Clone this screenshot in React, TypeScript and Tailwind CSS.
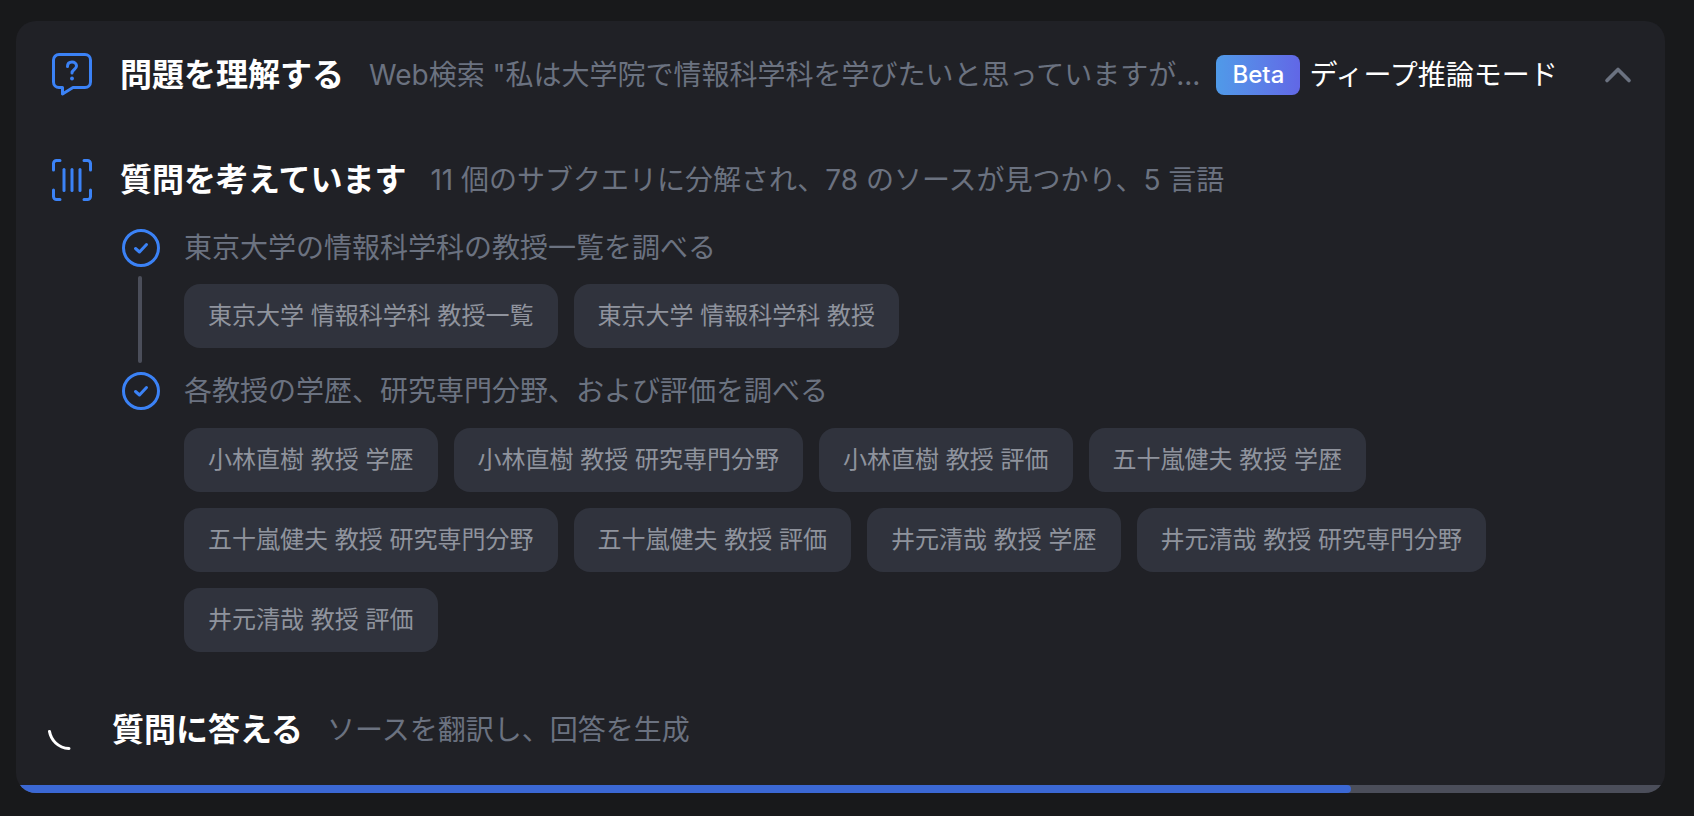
import { ChevronUp } from "lucide-react";

const font = { fontFamily: '"Inter", "Noto Sans CJK JP", sans-serif' };

function QuestionIcon() {
  return (
    <svg width="40" height="44" viewBox="0 0 40 44" fill="none" className="shrink-0">
      <path
        d="M7 1.500H33A5.500 5.500 0 0 1 38.500 7V29A5.500 5.500 0 0 1 33 34.500H21L10.500 41V34.500H7A5.500 5.500 0 0 1 1.500 29V7A5.500 5.500 0 0 1 7 1.500Z"
        stroke="#3b82f6"
        strokeWidth="3"
        strokeLinejoin="round"
      />
      <path
        d="M15.500 13.500C15.500 10.500 17.500 9 20 9C22.500 9 24.500 10.500 24.500 13C24.500 16.500 20 16.500 20 20"
        stroke="#3b82f6"
        strokeWidth="3"
        strokeLinecap="round"
      />
      <circle cx="20" cy="25.500" r="1.900" fill="#3b82f6" />
    </svg>
  );
}

function ScanIcon() {
  return (
    <svg width="40" height="42" viewBox="0 0 40 42" fill="none" className="shrink-0">
      <g stroke="#3b82f6" strokeWidth="3" strokeLinecap="round">
        <path d="M8 1.500H4.500A3 3 0 0 0 1.500 4.500V11" />
        <path d="M32 1.500H35.500A3 3 0 0 1 38.500 4.500V11" />
        <path d="M8 40.500H4.500A3 3 0 0 1 1.500 37.500V31" />
        <path d="M32 40.500H35.500A3 3 0 0 0 38.500 37.500V31" />
        <path d="M12 10.500V31.500" />
        <path d="M20 10.500V31.500" />
        <path d="M28 10.500V31.500" />
      </g>
    </svg>
  );
}

function CheckIcon() {
  return (
    <svg width="38" height="38" viewBox="0 0 38 38" fill="none" className="shrink-0">
      <circle cx="19" cy="19" r="17.500" stroke="#3b82f6" strokeWidth="3" />
      <path
        d="M13.500 19.500L17.500 23L24.500 15.500"
        stroke="#3b82f6"
        strokeWidth="3"
        strokeLinecap="round"
        strokeLinejoin="round"
      />
    </svg>
  );
}

function Spinner() {
  return (
    <svg width="40" height="40" viewBox="0 0 40 40" fill="none" className="shrink-0">
      <path d="M1.500 21.500C3 30 10 38 21 38.500" stroke="#ffffff" strokeWidth="3" strokeLinecap="round" />
    </svg>
  );
}

function Chip({ label }: { label: string }) {
  return (
    <span className="flex h-16 items-center rounded-2xl bg-[#30333d] px-6 text-2xl text-[#8f939d]">
      {label}
    </span>
  );
}

const firstChips = ["東京大学 情報科学科 教授一覧", "東京大学 情報科学科 教授"];
const secondChips = [
  "小林直樹 教授 学歴",
  "小林直樹 教授 研究専門分野",
  "小林直樹 教授 評価",
  "五十嵐健夫 教授 学歴",
  "五十嵐健夫 教授 研究専門分野",
  "五十嵐健夫 教授 評価",
  "井元清哉 教授 学歴",
  "井元清哉 教授 研究専門分野",
  "井元清哉 教授 評価",
];

export default function App() {
  return (
    <div className="h-[816px] w-full overflow-hidden bg-[#18191b] px-4 pt-[21px]" style={font}>
      <div className="flex h-[772px] w-[1649px] flex-col overflow-hidden rounded-[20px] bg-[#202126]">
        <div className="flex-1 pl-9">
          <div className="mt-[34px] flex h-10 items-center">
            <QuestionIcon />
            <h2 className="ml-7 text-[32px] font-bold text-white">問題を理解する</h2>
            <p className="ml-[25px] text-[28px] text-[#6b7280]">
              Web検索 "私は大学院で情報科学科を学びたいと思っていますが...
            </p>
            <span className="ml-4 flex h-10 w-[84px] items-center justify-center rounded-lg bg-gradient-to-r from-[#4f9ae8] to-[#6167e6] text-2xl font-medium text-white">
              Beta
            </span>
            <span className="ml-[9px] text-[28px] text-white">ディープ推論モード</span>
            <ChevronUp className="ml-[38px] text-[#6b7280]" size={44} strokeWidth={2} />
          </div>

          <div className="mt-[65px] flex h-10 items-center">
            <ScanIcon />
            <h2 className="ml-7 text-[32px] font-bold text-white">質問を考えています</h2>
            <p className="ml-6 text-[28px] text-[#6b7280]">
              11 個のサブクエリに分解され、78 のソースが見つかり、5 言語
            </p>
          </div>

          <div className="mt-[29px] flex flex-col pl-[70px]">
            <div className="flex h-[38px] items-center gap-6">
              <CheckIcon />
              <p className="text-[28px] text-[#6b7280]">東京大学の情報科学科の教授一覧を調べる</p>
            </div>
            <div className="flex">
              <div className="mt-[9px] ml-4 h-[87px] w-1 rounded-full bg-[#4b4e5a]" />
              <div className="mt-[17px] ml-[42px] flex flex-wrap gap-4">
                {firstChips.map((chip) => (
                  <Chip key={chip} label={chip} />
                ))}
              </div>
            </div>
            <div className="mt-[9px] flex h-[38px] items-center gap-6">
              <CheckIcon />
              <p className="text-[28px] text-[#6b7280]">各教授の学歴、研究専門分野、および評価を調べる</p>
            </div>
            <div className="mt-[18px] ml-[62px] flex w-[1400px] flex-wrap gap-4">
              {secondChips.map((chip) => (
                <Chip key={chip} label={chip} />
              ))}
            </div>
          </div>

          <div className="mt-[58px] -ml-1 flex h-10 items-center">
            <Spinner />
            <h2 className="ml-6 text-[32px] font-bold text-white">質問に答える</h2>
            <p className="ml-6 text-[28px] text-[#6b7280]">ソースを翻訳し、回答を生成</p>
          </div>
        </div>

        <div className="h-2 w-full bg-[#4b4e5a]">
          <div className="h-full w-[1335px] rounded-r-full bg-[#3b68d4]" />
        </div>
      </div>
    </div>
  );
}
